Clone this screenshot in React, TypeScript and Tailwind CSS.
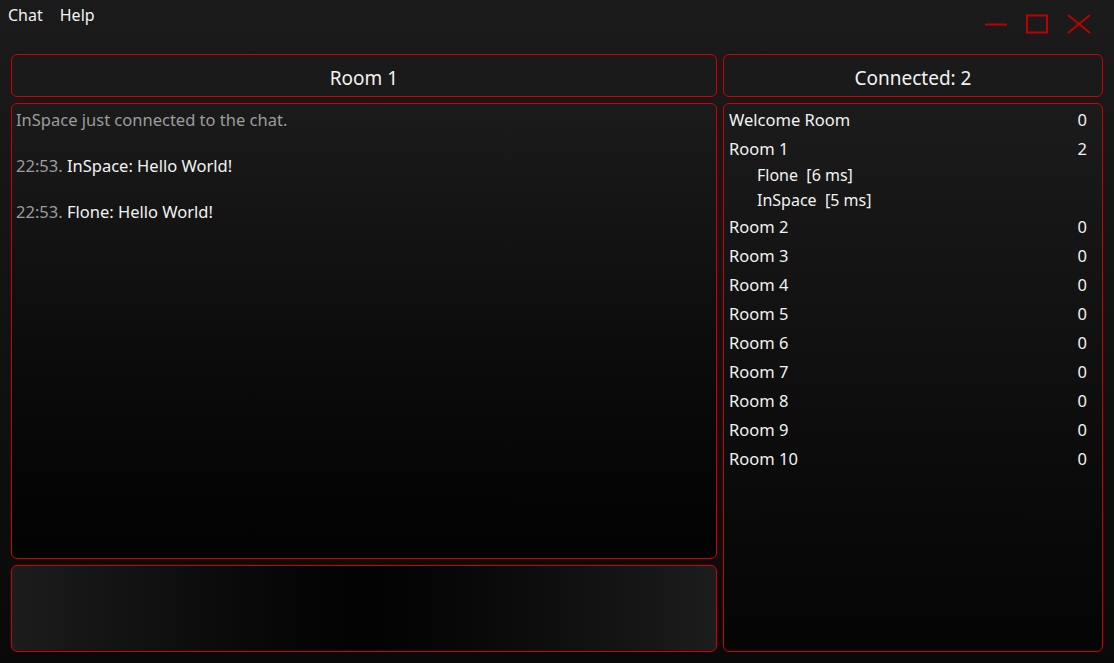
import { useState } from "react";

type Room = {
  name: string;
  count: number;
  users?: { name: string; ping: number }[];
};

const rooms: Room[] = [
  { name: "Welcome Room", count: 0 },
  {
    name: "Room 1",
    count: 2,
    users: [
      { name: "Flone", ping: 6 },
      { name: "InSpace", ping: 5 },
    ],
  },
  { name: "Room 2", count: 0 },
  { name: "Room 3", count: 0 },
  { name: "Room 4", count: 0 },
  { name: "Room 5", count: 0 },
  { name: "Room 6", count: 0 },
  { name: "Room 7", count: 0 },
  { name: "Room 8", count: 0 },
  { name: "Room 9", count: 0 },
  { name: "Room 10", count: 0 },
];

const messages = [
  { time: "", text: "InSpace just connected to the chat.", system: true },
  { time: "22:53.", text: "InSpace: Hello World!" },
  { time: "22:53.", text: "Flone: Hello World!" },
];

export default function App() {
  const [draft, setDraft] = useState("");

  return (
    <div
      className="w-[1114px] h-[663px] flex flex-col bg-gradient-to-b from-[#1b1b1b] to-[#090909] text-[#f2f2f2] overflow-hidden"
      style={{ fontFamily: '"Noto Sans", "Open Sans", sans-serif' }}
    >
      {/* title bar */}
      <div className="h-[54px] flex items-start justify-between">
        <div className="flex gap-[17px] pl-2 pt-[4px] text-[16px] leading-[22px]">
          <span>Chat</span>
          <span>Help</span>
        </div>
        <div className="flex items-center gap-[18px] pr-[22px] pt-[14px]">
          <svg width="24" height="20" viewBox="0 0 24 20">
            <line x1="1" y1="10.5" x2="23" y2="10.5" stroke="#c00000" strokeWidth="2" />
          </svg>
          <svg width="22" height="20" viewBox="0 0 22 20">
            <rect x="1" y="1.5" width="20" height="17" fill="none" stroke="#c00000" strokeWidth="2" />
          </svg>
          <svg width="26" height="20" viewBox="0 0 26 20">
            <path d="M2 1 L24 19 M24 1 L2 19" stroke="#c00000" strokeWidth="2" />
          </svg>
        </div>
      </div>

      <div className="flex-1 flex gap-[6px] px-[11px] pb-[11px] min-h-0">
        {/* left column */}
        <div className="w-[706px] flex flex-col gap-[6px]">
          <div className="h-[43px] rounded-[6px] border-[1.5px] border-[#d40000] bg-[#1a1a1a] flex items-center justify-center pt-[5px] text-[19px]">
            Room 1
          </div>
          <div className="flex-1 rounded-[6px] border-[1.5px] border-[#d40000] bg-gradient-to-b from-[#1b1b1b] to-[#030303] px-[4px] pt-[4px] text-[16.5px] leading-[23px]">
            {messages.map((m, i) => (
              <div key={i} className={i > 0 ? "mt-[23px]" : ""}>
                {m.system ? (
                  <span className="text-[#9c9c9c]">{m.text}</span>
                ) : (
                  <>
                    <span className="text-[#9c9c9c]">{m.time} </span>
                    <span>{m.text}</span>
                  </>
                )}
              </div>
            ))}
          </div>
          <textarea
            value={draft}
            onChange={(e) => setDraft(e.target.value)}
            className="h-[87px] resize-none outline-none rounded-[6px] border-[1.5px] border-[#d40000] bg-gradient-to-r from-[#1c1c1c] via-[#030303] to-[#1c1c1c] px-[4px] py-[3px] text-[16px]"
          />
        </div>

        {/* right column */}
        <div className="flex-1 flex flex-col gap-[6px]">
          <div className="h-[43px] rounded-[6px] border-[1.5px] border-[#d40000] bg-[#1a1a1a] flex items-center justify-center pt-[5px] text-[19px]">
            Connected: 2
          </div>
          <div className="flex-1 rounded-[6px] border-[1.5px] border-[#d40000] bg-gradient-to-b from-[#1b1b1b] to-[#050505] pl-[5px] pr-[15px] pt-[2px] text-[16.5px]">
            {rooms.map((room) => (
              <div key={room.name}>
                <div className="h-[29px] flex items-center justify-between">
                  <span>{room.name}</span>
                  <span>{room.count}</span>
                </div>
                {room.users && (
                  <div className="pl-[28px] -mt-[2px] mb-[1px] text-[16px]">
                    {room.users.map((u) => (
                      <div key={u.name} className="h-[25px] flex items-center">
                        {u.name}&nbsp;&nbsp;[{u.ping} ms]
                      </div>
                    ))}
                  </div>
                )}
              </div>
            ))}
          </div>
        </div>
      </div>
    </div>
  );
}
